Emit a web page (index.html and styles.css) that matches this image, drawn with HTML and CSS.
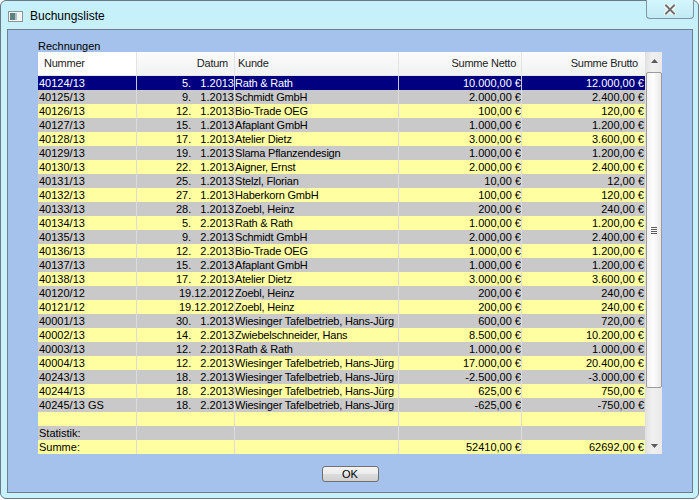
FILE: index.html
```html
<!DOCTYPE html>
<html lang="de">
<head>
<meta charset="utf-8">
<title>Buchungsliste</title>
<link rel="stylesheet" href="styles.css">
</head>
<body>
<div class="window">
  <div class="titlebar">
    <svg class="app-icon" width="15" height="11" viewBox="0 0 15 11">
      <rect x="0.5" y="0.5" width="14" height="10" fill="#f4f6f6" stroke="#8d9496"/>
      <rect x="2" y="2" width="5" height="7" fill="#5d8080"/>
      <rect x="7" y="2" width="2" height="7" fill="#a9c3c3"/>
    </svg>
    <span class="title">Buchungsliste</span>
    <div class="close">
      <svg width="12" height="11" viewBox="0 0 12 11">
        <path d="M2 1.5 L10 9.5 M10 1.5 L2 9.5" stroke="#ffffff" stroke-width="4.2" stroke-linecap="square" fill="none"/>
        <path d="M2 1.5 L10 9.5 M10 1.5 L2 9.5" stroke="#6f6f6f" stroke-width="2" stroke-linecap="square" fill="none"/>
      </svg>
    </div>
  </div>
  <div class="client">
    <div class="group-label">Rechnungen</div>
    <div class="grid">
      <div class="table">
        <div class="thead">
          <div class="th th-first">Nummer</div>
          <div class="th th-right">Datum</div>
          <div class="th">Kunde</div>
          <div class="th th-right th-netto">Summe Netto</div>
          <div class="th th-right th-brutto">Summe Brutto</div>
        </div>
        <div class="tbody">
          <div class="row sel"><div class="c">40124/13</div><div class="c r">5.   1.2013</div><div class="c k">Rath &amp; Rath</div><div class="c r">10.000,00 €</div><div class="c r">12.000,00 €</div></div>
          <div class="row gray"><div class="c">40125/13</div><div class="c r">9.   1.2013</div><div class="c k">Schmidt GmbH</div><div class="c r">2.000,00 €</div><div class="c r">2.400,00 €</div></div>
          <div class="row yel"><div class="c">40126/13</div><div class="c r">12.   1.2013</div><div class="c k">Bio-Trade OEG</div><div class="c r">100,00 €</div><div class="c r">120,00 €</div></div>
          <div class="row gray"><div class="c">40127/13</div><div class="c r">15.   1.2013</div><div class="c k">Afaplant GmbH</div><div class="c r">1.000,00 €</div><div class="c r">1.200,00 €</div></div>
          <div class="row yel"><div class="c">40128/13</div><div class="c r">17.   1.2013</div><div class="c k">Atelier Dietz</div><div class="c r">3.000,00 €</div><div class="c r">3.600,00 €</div></div>
          <div class="row gray"><div class="c">40129/13</div><div class="c r">19.   1.2013</div><div class="c k">Slama Pflanzendesign</div><div class="c r">1.000,00 €</div><div class="c r">1.200,00 €</div></div>
          <div class="row yel"><div class="c">40130/13</div><div class="c r">22.   1.2013</div><div class="c k">Aigner, Ernst</div><div class="c r">2.000,00 €</div><div class="c r">2.400,00 €</div></div>
          <div class="row gray"><div class="c">40131/13</div><div class="c r">25.   1.2013</div><div class="c k">Stelzl, Florian</div><div class="c r">10,00 €</div><div class="c r">12,00 €</div></div>
          <div class="row yel"><div class="c">40132/13</div><div class="c r">27.   1.2013</div><div class="c k">Haberkorn GmbH</div><div class="c r">100,00 €</div><div class="c r">120,00 €</div></div>
          <div class="row gray"><div class="c">40133/13</div><div class="c r">28.   1.2013</div><div class="c k">Zoebl, Heinz</div><div class="c r">200,00 €</div><div class="c r">240,00 €</div></div>
          <div class="row yel"><div class="c">40134/13</div><div class="c r">5.   2.2013</div><div class="c k">Rath &amp; Rath</div><div class="c r">1.000,00 €</div><div class="c r">1.200,00 €</div></div>
          <div class="row gray"><div class="c">40135/13</div><div class="c r">9.   2.2013</div><div class="c k">Schmidt GmbH</div><div class="c r">2.000,00 €</div><div class="c r">2.400,00 €</div></div>
          <div class="row yel"><div class="c">40136/13</div><div class="c r">12.   2.2013</div><div class="c k">Bio-Trade OEG</div><div class="c r">1.000,00 €</div><div class="c r">1.200,00 €</div></div>
          <div class="row gray"><div class="c">40137/13</div><div class="c r">15.   2.2013</div><div class="c k">Afaplant GmbH</div><div class="c r">1.000,00 €</div><div class="c r">1.200,00 €</div></div>
          <div class="row yel"><div class="c">40138/13</div><div class="c r">17.   2.2013</div><div class="c k">Atelier Dietz</div><div class="c r">3.000,00 €</div><div class="c r">3.600,00 €</div></div>
          <div class="row gray"><div class="c">40120/12</div><div class="c r">19.12.2012</div><div class="c k">Zoebl, Heinz</div><div class="c r">200,00 €</div><div class="c r">240,00 €</div></div>
          <div class="row yel"><div class="c">40121/12</div><div class="c r">19.12.2012</div><div class="c k">Zoebl, Heinz</div><div class="c r">200,00 €</div><div class="c r">240,00 €</div></div>
          <div class="row gray"><div class="c">40001/13</div><div class="c r">30.   1.2013</div><div class="c k">Wiesinger Tafelbetrieb, Hans-Jürg</div><div class="c r">600,00 €</div><div class="c r">720,00 €</div></div>
          <div class="row yel"><div class="c">40002/13</div><div class="c r">14.   2.2013</div><div class="c k">Zwiebelschneider, Hans</div><div class="c r">8.500,00 €</div><div class="c r">10.200,00 €</div></div>
          <div class="row gray"><div class="c">40003/13</div><div class="c r">12.   2.2013</div><div class="c k">Rath &amp; Rath</div><div class="c r">1.000,00 €</div><div class="c r">1.000,00 €</div></div>
          <div class="row yel"><div class="c">40004/13</div><div class="c r">12.   2.2013</div><div class="c k">Wiesinger Tafelbetrieb, Hans-Jürg</div><div class="c r">17.000,00 €</div><div class="c r">20.400,00 €</div></div>
          <div class="row gray"><div class="c">40243/13</div><div class="c r">18.   2.2013</div><div class="c k">Wiesinger Tafelbetrieb, Hans-Jürg</div><div class="c r">-2.500,00 €</div><div class="c r">-3.000,00 €</div></div>
          <div class="row yel"><div class="c">40244/13</div><div class="c r">18.   2.2013</div><div class="c k">Wiesinger Tafelbetrieb, Hans-Jürg</div><div class="c r">625,00 €</div><div class="c r">750,00 €</div></div>
          <div class="row gray"><div class="c">40245/13 GS</div><div class="c r">18.   2.2013</div><div class="c k">Wiesinger Tafelbetrieb, Hans-Jürg</div><div class="c r">-625,00 €</div><div class="c r">-750,00 €</div></div>
          <div class="row yel"><div class="c"></div><div class="c r"></div><div class="c k"></div><div class="c r"></div><div class="c r"></div></div>
          <div class="row gray"><div class="c">Statistik:</div><div class="c r"></div><div class="c k"></div><div class="c r"></div><div class="c r"></div></div>
          <div class="row yel"><div class="c">Summe:</div><div class="c r"></div><div class="c k"></div><div class="c r">52410,00 €</div><div class="c r">62692,00 €</div></div>
        </div>
      </div>
      <div class="scrollbar">
        <div class="sb-btn">
          <svg width="7" height="4" viewBox="0 0 7 4"><path d="M0 4 L3.5 0 L7 4 Z" fill="#5a5a5a"/></svg>
        </div>
        <div class="sb-track">
          <div class="sb-thumb">
            <div class="grip"></div>
          </div>
        </div>
        <div class="sb-btn">
          <svg width="7" height="4" viewBox="0 0 7 4"><path d="M0 0 L7 0 L3.5 4 Z" fill="#5a5a5a"/></svg>
        </div>
      </div>
    </div>
    <div class="actions">
      <button class="ok">OK</button>
    </div>
  </div>
</div>
</body>
</html>
```

FILE: styles.css
```css
html, body {
  margin: 0;
  padding: 0;
  background: #ffffff;
}

body {
  font-family: "Liberation Sans", Arial, sans-serif;
  font-size: 11px;
  color: #000;
}

.window {
  box-sizing: border-box;
  width: 699px;
  height: 499px;
  border: 1px solid #6c7884;
  border-radius: 6px;
  background: #c6f1fb;
  padding: 0 5px 5px 6px;
  display: flex;
  flex-direction: column;
}

.titlebar {
  height: 28px;
  display: flex;
  align-items: center;
  padding-left: 1px;
  flex: none;
}

.app-icon {
  display: block;
  margin-top: 2px;
}

.title {
  margin-left: 7px;
  font-size: 12px;
  color: #000;
  margin-top: 1px;
}

.close {
  margin-left: auto;
  margin-right: -1px;
  align-self: flex-start;
  margin-top: -1px;
  box-sizing: border-box;
  width: 48px;
  height: 19px;
  border: 1px solid #8393a2;
  border-top: none;
  border-radius: 0 0 4px 4px;
  background: linear-gradient(#d5f6fd, #c0ebf5);
  display: flex;
  align-items: center;
  justify-content: center;
}

.close svg {
  display: block;
  margin-top: 1px;
}

.client {
  flex: 1;
  box-sizing: border-box;
  border: 1px solid #6f7d8b;
  background: #a4c2ec;
  padding: 10px 30px 0 30px;
  display: flex;
  flex-direction: column;
}

.group-label {
  height: 12px;
  line-height: 12px;
  font-size: 11px;
  color: #000;
}

.grid {
  display: flex;
  height: 402px;
  flex: none;
}

.table {
  width: 607px;
  display: flex;
  flex-direction: column;
}

.thead,
.row {
  display: grid;
  grid-template-columns: 99px 98px 164px 123px 123px;
}

.thead {
  height: 24px;
  box-sizing: border-box;
  border-bottom: 1px solid #e4e4e4;
  background: linear-gradient(#fbfbfb, #f1f2f3);
}

.th {
  box-sizing: border-box;
  border-right: 1px solid #e2e3e4;
  line-height: 22px;
  padding: 0 4px 0 3px;
  font-size: 11px;
  letter-spacing: -0.25px;
  color: #1e1e1e;
  white-space: nowrap;
}

.th-first {
  background: #ffffff;
  padding-left: 6px;
}

.th-right {
  text-align: right;
  padding-right: 6px;
}

.th-netto {
  padding-right: 5px;
}

.th-brutto {
  border-right: none;
  padding-right: 7px;
}

.tbody {
  display: flex;
  flex-direction: column;
}

.row {
  height: 14px;
}

.c {
  box-sizing: border-box;
  height: 14px;
  line-height: 14px;
  padding: 0 1px;
  border-right: 1px solid #dcdcdc;
  white-space: pre;
  overflow: hidden;
}

.c:last-child {
  border-right: none;
}

.c.r {
  text-align: right;
  padding-right: 0;
}

.c.r:last-child {
  padding-right: 1px;
}

.c.k {
  padding-left: 0;
  letter-spacing: -0.2px;
}

.yel {
  background: #ffffa2;
}

.gray {
  background: #c9c9c9;
}

.sel {
  background: #000080;
  color: #ffffff;
}

.sel .c {
  border-right-color: #c8c8d8;
}

.sel .c:last-child {
  border-right: none;
}

.scrollbar {
  width: 17px;
  box-sizing: border-box;
  border-left: 1px solid #e0e0e0;
  background: linear-gradient(90deg, #e3e3e3, #f0f0f0 40%, #e9e9e9);
  display: flex;
  flex-direction: column;
}

.sb-btn {
  height: 17px;
  display: flex;
  align-items: center;
  justify-content: center;
  flex: none;
}

.sb-track {
  flex: 1;
  padding: 3px 0 49px 0;
  display: flex;
  flex-direction: column;
}

.sb-thumb {
  flex: 1;
  margin: 0 0 0 0;
  box-sizing: border-box;
  border: 1px solid #9b9b9b;
  border-radius: 2px;
  background: linear-gradient(90deg, #f2f2f2, #fdfdfd 45%, #e8e8e8);
  display: flex;
  align-items: center;
  justify-content: center;
}

.grip {
  width: 6px;
  height: 7px;
  background: repeating-linear-gradient(#5f5f5f 0, #5f5f5f 1px, transparent 1px, transparent 2px);
}

.actions {
  display: flex;
  justify-content: center;
  margin-top: 12px;
}

.ok {
  box-sizing: border-box;
  width: 57px;
  height: 16px;
  padding: 0;
  margin: 0;
  border: 1px solid #707070;
  border-radius: 3px;
  background: linear-gradient(#f3f3f3 0%, #ebebeb 50%, #dcdcdc 51%, #d0d0d0 100%);
  font-family: "Liberation Sans", Arial, sans-serif;
  font-size: 11px;
  line-height: 14px;
  color: #000;
}
```
